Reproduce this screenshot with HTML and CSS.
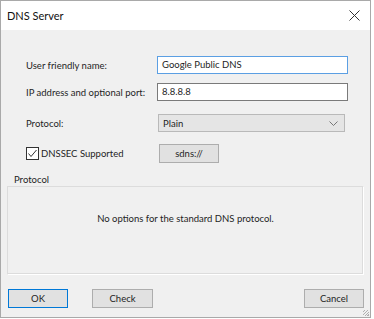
FILE: index.html
```html
<!DOCTYPE html>
<html lang="en">
<head>
  <meta charset="UTF-8" />
  <title>DNS Server</title>
  <link rel="stylesheet" href="styles.css">
</head>
<body>
  <div class="window">
    <div class="titlebar">
      <span class="title">DNS Server</span>
      <svg class="close" width="11" height="11" viewBox="0 0 11 11">
        <path d="M0.5 0.5 L10.5 10.5 M10.5 0.5 L0.5 10.5" stroke="#333" stroke-width="1" fill="none"/>
      </svg>
    </div>
    <div class="content">
      <div class="row row-name">
        <label class="label">User friendly name:</label>
        <div class="field field-focus">Google Public DNS</div>
      </div>
      <div class="row row-ip">
        <label class="label">IP address and optional port:</label>
        <div class="field">8.8.8.8</div>
      </div>
      <div class="row row-proto">
        <label class="label">Protocol:</label>
        <div class="combo">
          <span>Plain</span>
          <svg width="9" height="5" viewBox="0 0 9 5">
            <path d="M0.5 0.5 L4.5 4.5 L8.5 0.5" stroke="#777" stroke-width="1" fill="none"/>
          </svg>
        </div>
      </div>
      <div class="row row-check">
        <label class="label check">
          <span class="box">
            <svg width="11" height="11" viewBox="0 0 11 11">
              <path d="M1.5 5.5 L4 8.5 L9.5 2" stroke="#333" stroke-width="1" fill="none"/>
            </svg>
          </span>
          DNSSEC Supported
        </label>
        <div class="btn btn-stamp">sdns://</div>
      </div>

      <div class="group-title">Protocol</div>
      <div class="group">
        <p class="note">No options for the standard DNS protocol.</p>
      </div>

      <div class="buttons">
        <div class="btn btn-ok">OK</div>
        <div class="btn btn-check">Check</div>
        <div class="spacer"></div>
        <div class="btn btn-cancel">Cancel</div>
      </div>
      <span class="grip"></span>
    </div>
  </div>
</body>
</html>
```

FILE: styles.css
```css
body { margin: 0; background: #fff; font-family: Lato, "Open Sans", sans-serif; font-size: 9.5px; color: #1e1e1e; }
.window { width: 369px; height: 316px; border: 1px solid #a9a9a9; display: flex; flex-direction: column; }
.titlebar { height: 29px; background: #fff; display: flex; align-items: center; padding: 0 7px 0 6px; }
.title { flex: 1; font-size: 11px; color: #111; }
.close { margin-right: 3px; }
.content { flex: 1; background: #f0f0f0; position: relative; padding: 26px 6px 0 6px; }
.row { display: flex; align-items: center; height: 18px; padding-left: 19px; }
.row-ip { margin-top: 9px; }
.row-proto { margin-top: 13px; }
.row-check { margin-top: 12px; }
.label { width: 131px; }
.field { width: 185px; height: 16px; border: 1px solid #7a7a7a; background: #fff; padding-left: 4px; line-height: 16px; }
.field-focus { border-color: #5b9fe3; }
.combo { width: 175px; height: 16px; margin-left: 1px; border: 1px solid #b9b9b9; background: #e5e5e5; padding: 0 6px 0 4px; display: flex; align-items: center; justify-content: space-between; }
.check { display: flex; align-items: center; gap: 2px; }
.box { width: 11px; height: 11px; border: 1px solid #333; background: #fff; display: flex; }
.btn { height: 17px; border: 1px solid #adadad; background: #e1e1e1; display: flex; align-items: center; justify-content: center; }
.btn-stamp { width: 58px; margin-left: 2px; }
.group-title { margin: 13px 0 0 7px; height: 10px; line-height: 10px; }
.group { height: 87px; border: 1px solid #dcdcdc; border-right-color: #fff; border-bottom-color: #fff; box-shadow: inset -1px -1px 0 #dcdcdc; margin-top: 1px; }
.note { margin: 26px 0 0 0; text-align: center; }
.buttons { display: flex; margin-top: 14px; padding-left: 1px; }
.btn-ok { width: 58px; border-color: #0078d7; }
.btn-check { width: 59px; margin-left: 24px; }
.spacer { flex: 1; }
.btn-cancel { width: 58px; margin-right: 0; }
.grip { position: absolute; right: 1px; bottom: 1px; width: 6px; height: 6px; background: repeating-linear-gradient(135deg, transparent 0 1px, #b0b0b0 1px 2px); }
```
